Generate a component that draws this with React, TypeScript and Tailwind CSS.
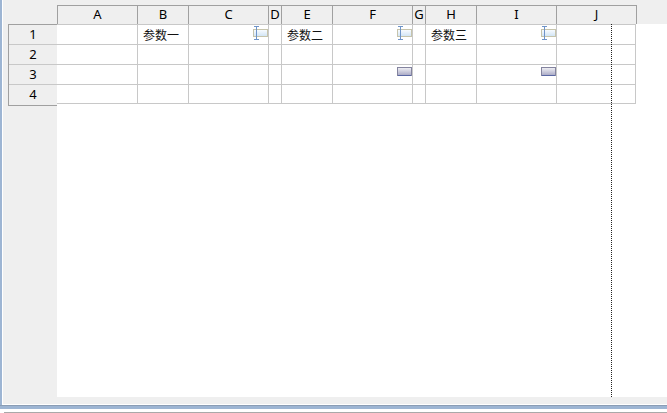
const columns = ["A", "B", "C", "D", "E", "F", "G", "H", "I", "J"];
const rows = [1, 2, 3, 4];

// cell content by row then column
const labels: Record<string, string> = { "1-1": "参数一", "1-4": "参数二", "1-7": "参数三" };
const inputCols = [2, 5, 8];
const buttonCols = [5, 8];

function InputWidget() {
  return (
    <svg width="15" height="14" viewBox="0 0 15 14" className="block shrink-0">
      <defs>
        <linearGradient id="inputFill" x1="0" y1="0" x2="0" y2="1">
          <stop offset="0" stopColor="#fbfdff" />
          <stop offset="1" stopColor="#cfe3f5" />
        </linearGradient>
      </defs>
      <rect x="0.5" y="3.5" width="14" height="7" fill="url(#inputFill)" stroke="#c6c4ac" />
      <path d="M1 0.5h5M3.5 0.5v13M1 13.5h5" stroke="#6f94c8" fill="none" />
    </svg>
  );
}

function ButtonWidget() {
  return (
    <svg width="15" height="9" viewBox="0 0 15 9" className="block shrink-0">
      <defs>
        <linearGradient id="buttonFill" x1="0" y1="0" x2="0" y2="1">
          <stop offset="0" stopColor="#f2f2f6" />
          <stop offset="1" stopColor="#a8a8c4" />
        </linearGradient>
      </defs>
      <rect x="0.5" y="0.5" width="14" height="8" fill="url(#buttonFill)" stroke="#84849f" />
      <path d="M1 8.5h13" stroke="#5a68a4" />
    </svg>
  );
}

export default function App() {
  return (
    <div className="w-[667px] h-[413px] overflow-hidden bg-white flex flex-col font-['Noto_Sans','Noto_Sans_CJK_SC',sans-serif] text-[13px] text-black">
      <div className="flex h-[405px] shrink-0">
        <div className="w-[2px] bg-[#9db5d3]" />
        <div className="flex-1 flex flex-col pl-[1px] pb-[1px]">
          <div className="flex-1 flex flex-col bg-[#efefef]">
            {/* Column headers */}
            <div className="flex h-[24px] pt-[5px] shrink-0">
              <div className="w-[54px] shrink-0" />
              <div className="grid grid-cols-[80px_51px_80px_13px_51px_80px_13px_51px_80px_80px] border-t border-l border-[#a0a0a0]">
                {columns.map((c) => (
                  <div key={c} className="h-[18px] flex items-center justify-center border-r border-[#a0a0a0]">
                    {c}
                  </div>
                ))}
              </div>
            </div>

            <div className="flex h-[373px] shrink-0">
              {/* Row headers */}
              <div className="w-[54px] shrink-0 pl-[5px]">
                <div className="border-l border-[#a0a0a0]">
                  {rows.map((r) => (
                    <div
                      key={r}
                      className={
                        r === 1
                          ? "h-[21px] flex items-center justify-center border-t border-b border-t-[#a0a0a0] border-b-[#c8c8c8]"
                          : r === 4
                            ? "h-[21px] flex items-center justify-center border-b border-[#a0a0a0]"
                            : "h-[20px] flex items-center justify-center border-b border-[#c8c8c8]"
                      }
                    >
                      {r}
                    </div>
                  ))}
                </div>
              </div>

              {/* Sheet */}
              <div className="relative flex-1 bg-white">
                <div className="grid grid-cols-[81px_51px_80px_13px_51px_80px_13px_51px_80px_79px] w-[579px]">
                  {rows.map((r) =>
                    columns.map((c, i) => (
                      <div
                        key={c + r}
                        className={
                          r === 1
                            ? "h-[21px] pt-[1px] flex items-start border-t border-b border-r border-[#c8c8c8]"
                            : r === 4
                              ? "h-[19px] flex items-start border-b border-r border-[#c8c8c8]"
                              : "h-[20px] flex items-start border-b border-r border-[#c8c8c8]"
                        }
                      >
                        {labels[`${r}-${i}`] && (
                          <span className="pl-[5px] pt-[1px] text-[12px] leading-[18px] whitespace-nowrap text-[#111]">{labels[`${r}-${i}`]}</span>
                        )}
                        {r === 1 && inputCols.includes(i) && (
                          <div className="ml-auto">
                            <InputWidget />
                          </div>
                        )}
                        {r === 3 && buttonCols.includes(i) && (
                          <div className="ml-auto pt-[2px]">
                            <ButtonWidget />
                          </div>
                        )}
                      </div>
                    )),
                  )}
                </div>
                {/* Page break marker */}
                <div className="absolute left-[554px] top-0 bottom-0 border-l border-dotted border-[#222]" />
              </div>
            </div>

            <div className="flex-1" />
          </div>
        </div>
      </div>

      {/* Bottom splitter */}
      <div className="h-[4px] shrink-0 bg-[#9db5d3] border-t border-[#8a9db5]" />
      <div className="flex-1 flex flex-col justify-end pl-[4px]">
        <div className="h-[1px] bg-[#a9a9a9]" />
      </div>
    </div>
  );
}
